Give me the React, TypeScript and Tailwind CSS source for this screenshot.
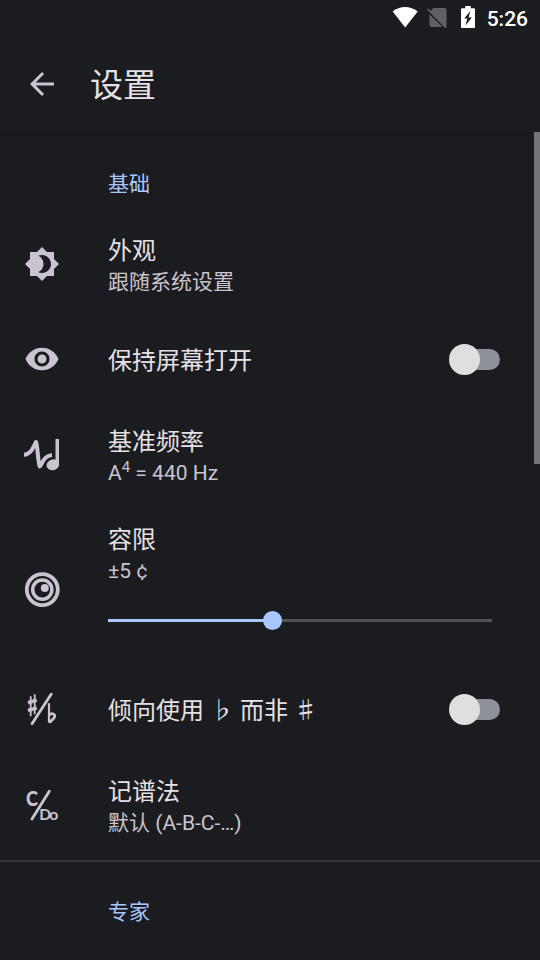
import type { ReactNode } from 'react'

interface RowProps {
  icon: ReactNode
  title: string
  summary?: ReactNode
  toggle?: boolean
}

function Svg({ children }: { children: ReactNode }) {
  return (
    <svg width="36" height="36" viewBox="0 0 36 36" fill="none" stroke="none" className="block shrink-0 overflow-visible">
      {children}
    </svg>
  )
}

function AppearanceIcon() {
  return (
    <svg width="36" height="36" viewBox="0 0 24 24" fill="currentColor" className="block shrink-0">
      <path d="M20 8.69V4h-4.69L12 .69 8.69 4H4v4.69L.69 12 4 15.31V20h4.69L12 23.31 15.31 20H20v-4.69L23.31 12 20 8.69zM12 18c-.89 0-1.74-.2-2.5-.55C11.56 16.5 13 14.42 13 12s-1.44-4.5-3.5-5.45C10.26 6.2 11.11 6 12 6c3.31 0 6 2.69 6 6s-2.69 6-6 6z" />
    </svg>
  )
}

function EyeIcon() {
  return (
    <svg width="36" height="36" viewBox="0 0 24 24" fill="currentColor" className="block shrink-0">
      <path d="M12 4.5C7 4.5 2.73 7.61 1 12c1.73 4.39 6 7.5 11 7.5s9.27-3.11 11-7.5c-1.73-4.39-6-7.5-11-7.5zM12 17c-2.76 0-5-2.24-5-5s2.24-5 5-5 5 2.24 5 5-2.24 5-5 5zm0-8c-1.66 0-3 1.34-3 3s1.34 3 3 3 3-1.34 3-3-1.34-3-3-3z" />
    </svg>
  )
}

function FrequencyIcon() {
  return (
    <Svg>
      <path
        d="M0 17.8C6.5 17.6 9 11 12 5C14 10 13.6 24 15.8 29.5C18.5 26.5 19.5 18.8 28 18"
        stroke="currentColor"
        strokeWidth="4"
        strokeLinejoin="round"
      />
      <path d="M31.5 2H35v26h-3.5z" fill="currentColor" />
      <ellipse cx="28.9" cy="27.8" rx="6.4" ry="5.4" transform="rotate(-18 28.9 27.8)" fill="currentColor" />
    </Svg>
  )
}

function ToleranceIcon() {
  return (
    <Svg>
      <circle cx="18.3" cy="17.6" r="15.5" stroke="currentColor" strokeWidth="3.8" />
      <circle cx="18.3" cy="17.6" r="9.6" stroke="currentColor" strokeWidth="3.5" />
      <circle cx="20.8" cy="15.9" r="4" fill="currentColor" />
    </Svg>
  )
}

function AccidentalIcon() {
  return (
    <Svg>
      <g stroke="currentColor">
        <path d="M8 32.7L27.3 3.1" strokeWidth="2.8" strokeLinecap="round" />
        <path d="M6.7 5.2v20M10.7 3.2v20" strokeWidth="1.8" />
        <path d="M4 11.7l8.7-2.6M4 19.5l8.7-2.6" strokeWidth="3.5" />
        <path d="M25 12.2v19.5" strokeWidth="2.2" />
        <path d="M25.2 24.1c2-2.2 5.5-1.7 5.5 1 0 2.6-3 4.4-5.4 6.3" strokeWidth="2.8" />
      </g>
    </Svg>
  )
}

function NotationIcon() {
  return (
    <Svg>
      <path d="M8 32L25.3 4.2" stroke="currentColor" strokeWidth="2.8" strokeLinecap="round" />
      <g fill="currentColor" className="font-['Lato',sans-serif]">
        <text x="2" y="18.9" textLength="12" lengthAdjust="spacingAndGlyphs" className="text-[21px] font-black">
          C
        </text>
        <text x="15.2" y="32.6" textLength="11.8" lengthAdjust="spacingAndGlyphs" className="text-[15.5px] font-bold">
          D
        </text>
        <text x="25.3" y="32.6" textLength="9" lengthAdjust="spacingAndGlyphs" className="text-[15.5px] font-bold">
          o
        </text>
      </g>
    </Svg>
  )
}

function StatusBar() {
  return (
    <div className="flex h-9 items-center justify-end pr-3 text-white">
      <svg width="84" height="36" viewBox="0 0 84 36" className="block">
        <path d="M0.7 11.5C7.5 5.5 18.5 5.5 25.7 11.5L13.2 27.6z" fill="#fff" />
        <path d="M41 8H52.5a2 2 0 0 1 2 2v16l-1 1H39.5a2 2 0 0 1-2-2V12.5z" fill="#606165" />
        <path d="M35 10.5L54 29" stroke="#1b1c1f" strokeWidth="2" />
        <path d="M35.5 9L54 27.7" stroke="#606165" strokeWidth="1.7" />
        <path d="M73.3 6h5.4v2.2H82a1 1 0 0 1 1 1V27a1 1 0 0 1-1 1H70a1 1 0 0 1-1-1V9.2a1 1 0 0 1 1-1h3.3z" fill="#fff" />
        <path d="M78.3 11l-6.1 7.6h3.1L73.6 25.6l6.2-8.2h-3.2z" fill="#1b1c1f" />
      </svg>
      <span className="ml-[11px] pt-0.5 text-[21px] leading-9 font-medium">5:26</span>
    </div>
  )
}

function Toolbar() {
  return (
    <header className="flex h-24 items-center pl-6">
      <svg width="36" height="36" viewBox="0 0 24 24" fill="#c9c4d0" className="block">
        <path d="M20 11H7.83l5.59-5.59L12 4l-8 8 8 8 1.41-1.41L7.83 13H20v-2z" />
      </svg>
      <h1 className="ml-[30px] pt-1 text-[33px] leading-10">设置</h1>
    </header>
  )
}

function Toggle() {
  return (
    <div className="relative mr-10 h-[21px] w-12 rounded-full bg-[#8e9099]">
      <div className="absolute -top-[5px] -left-[3px] size-[31px] rounded-full bg-[#dfdee1]" />
    </div>
  )
}

function Slider({ value }: { value: number }) {
  return (
    <div className="relative mt-[33px] mr-12 h-[3px] bg-[#505155]">
      <div className="h-full bg-[#a9c7ff]" style={{ width: `${value}%` }} />
      <div className="absolute -top-2 -ml-[9px] size-[19px] rounded-full bg-[#a9c7ff]" style={{ left: `${value}%` }} />
    </div>
  )
}

function Texts({ title, summary }: { title: string; summary?: ReactNode }) {
  return (
    <>
      <div className="text-2xl leading-8 whitespace-pre">{title}</div>
      {summary && <div className="text-[21px] leading-[30px] text-[#c9c4d0]">{summary}</div>}
    </>
  )
}

function Row({ icon, title, summary, toggle }: RowProps) {
  return (
    <div className="flex h-[95.65px] items-center pl-6 text-[#c9c4d0]">
      {icon}
      <div className={`ml-12 flex-1 text-[#e5e1e6] ${summary ? 'pt-[5px]' : 'pt-[3px]'}`}>
        <Texts title={title} summary={summary} />
      </div>
      {toggle && <Toggle />}
    </div>
  )
}

function Category({ children }: { children: ReactNode }) {
  return <h2 className="pt-[34px] pl-[108px] text-[21px] leading-8 text-[#a9c7ff]">{children}</h2>
}

export default function App() {
  return (
    <div className="h-[960px] w-[540px] overflow-hidden bg-[#1b1c1f] font-[Roboto,'Noto_Sans_CJK_SC',sans-serif] text-[#e5e1e6]">
      <StatusBar />
      <Toolbar />
      <main className="relative h-[828px] border-t-2 border-[#17181b]">
        <div className="absolute -top-0.5 right-0 h-[332px] w-1.5 bg-[#78737e]" />
        <Category>基础</Category>
        <div className="mt-4">
          <Row icon={<AppearanceIcon />} title="外观" summary="跟随系统设置" />
          <Row icon={<EyeIcon />} title="保持屏幕打开" toggle />
          <Row
            icon={<FrequencyIcon />}
            title="基准频率"
            summary={
              <>
                A<span className="relative -top-2 text-[15px]">4</span> = 440 Hz
              </>
            }
          />
          <div className="flex h-[158.4px] pl-6 text-[#c9c4d0]">
            <div className="pt-[69px]">
              <ToleranceIcon />
            </div>
            <div className="ml-12 flex-1 pt-[21px] text-[#e5e1e6]">
              <Texts title="容限" summary="±5 ¢" />
              <Slider value={42.8} />
            </div>
          </div>
          <Row icon={<AccidentalIcon />} title="倾向使用 ♭ 而非 ♯" toggle />
          <Row icon={<NotationIcon />} title="记谱法" summary="默认 (A-B-C-…)" />
        </div>
        <div className="mt-[7px] h-0.5 bg-[#353639]" />
        <Category>专家</Category>
      </main>
    </div>
  )
}
